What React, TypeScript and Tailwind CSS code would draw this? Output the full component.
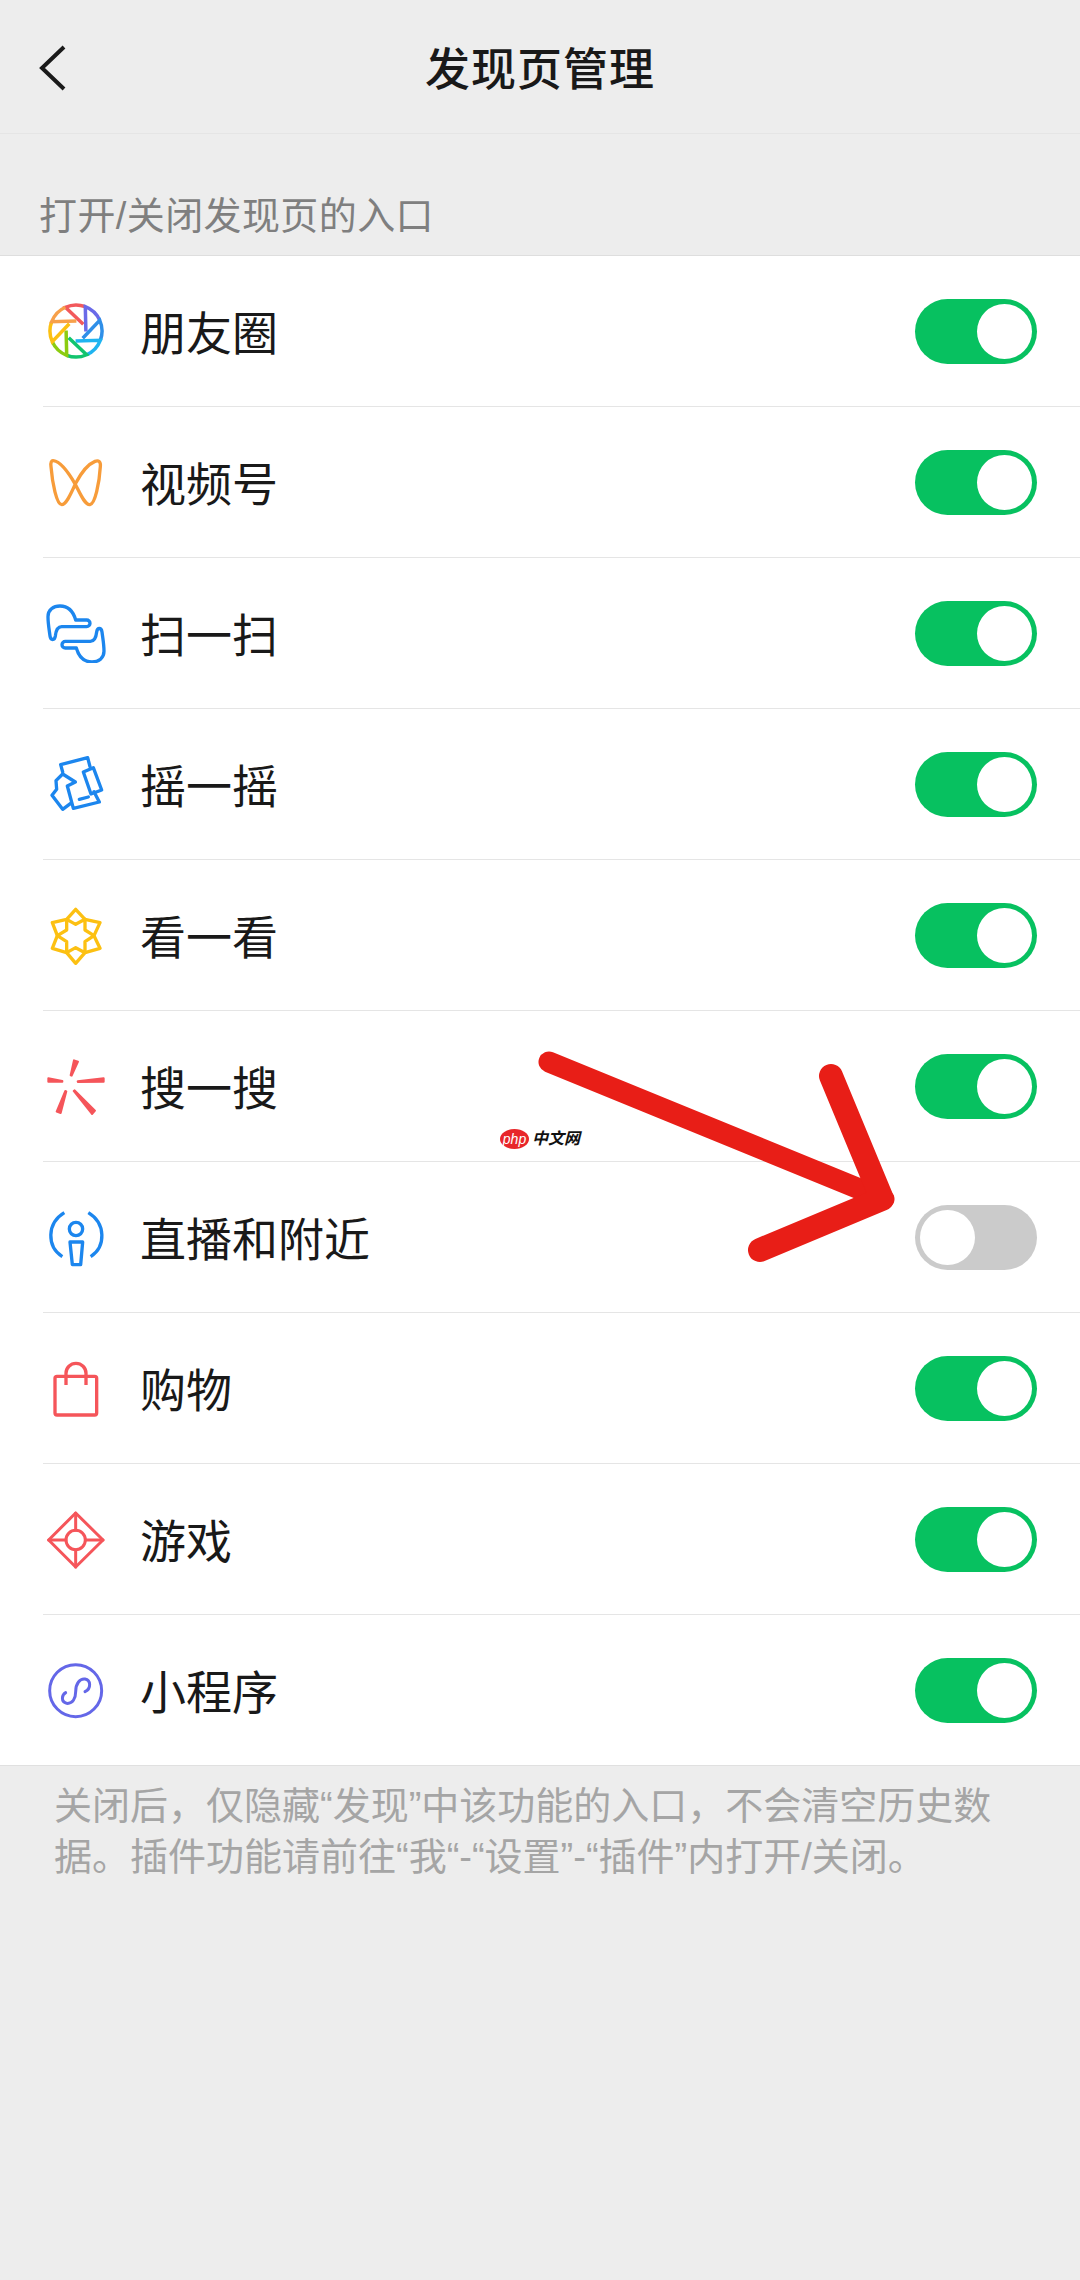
import type { ReactNode } from "react"

const ringColors = ["#f2595c", "#6a6ae8", "#2f8fe8", "#1fb4f0", "#12c46e", "#8ccc10", "#fcc012", "#f7a04a"]

function MomentsIcon() {
  return (
    <svg viewBox="0 0 60 60" className="w-[60px] h-[60px]" fill="none" strokeWidth="3.5">
      {ringColors.map((color, i) => (
        <path
          key={color}
          d="M37.3 23.3 L19.4 6.25 A26 26 0 0 1 39.3 5.7"
          stroke={color}
          transform={`rotate(${45 * i} 30 30)`}
        />
      ))}
    </svg>
  )
}

// the rest are traced at 3x, so viewBox is a 180 square round the icon
function Traced({ y, children, stroke = "none" }: { y: number; children: ReactNode; stroke?: string }) {
  return (
    <svg
      viewBox={`78 ${y} 180 180`}
      className="w-[60px] h-[60px]"
      fill="none"
      stroke={stroke}
      strokeWidth="10"
      strokeLinecap="round"
      strokeLinejoin="round"
    >
      {children}
    </svg>
  )
}

const icons: ReactNode[] = [
  <MomentsIcon key="moments" />,
  <Traced key="channels" y={96} stroke="#f79c3a">
    <path d="M100 122 C125 125 150 165 167 195 C180 220 195 256 210 254 C225 252 238 190 241 140 C243 124 235 120 225 124 C200 134 180 165 167 190 C155 215 140 254 125 254 C110 254 97 190 93 140 C91 127 95 121 100 122 Z" />
  </Traced>,
  <Traced key="scan" y={549} stroke="#1c86ee">
    <path d="M120 558 C145 558 160 575 167 600 L200 600 A10 10 0 0 1 200 620 L125 620 C112 620 108 630 106 648 C104 662 92 662 90 648 C87 625 84 610 84 590 C84 570 100 558 120 558 Z" />
    <path
      transform="rotate(180 168 642)"
      d="M120 558 C145 558 160 575 167 600 L200 600 A10 10 0 0 1 200 620 L125 620 C112 620 108 630 106 648 C104 662 92 662 90 648 C87 625 84 610 84 590 C84 570 100 558 120 558 Z"
    />
  </Traced>,
  <Traced key="shake" y={1002} stroke="#1c86ee">
    <path d="M210 1040 L203 1013 L122 1034 L128 1056 M222 1115 L238 1146 L160 1165 L142 1098 L166 1086 L128 1062 L108 1082 L110 1108 L96 1126 L128 1168 L152 1150" />
    <path d="M190 1056 L220 1043 L245 1110 L213 1122 Z" />
    <path d="M178 1138 L205 1131" />
  </Traced>,
  <Traced key="look" y={75} stroke="#fcc012">
    <path d="M167 88 L195 118 L240 128 L222 167 L240 205 L195 218 L167 250 L140 218 L97 205 L112 167 L97 128 L140 118 Z" />
    <path d="M140 118 L167 133 L195 118 L195 150 L222 167 L195 185 L195 218 L167 203 L140 218 L140 185 L112 167 L140 150 Z" />
  </Traced>,
  <Traced key="search" y={528}>
    <g fill="#f5555a" stroke="#f5555a" strokeWidth="6">
      <path d="M162 541 L174 545 L155 587 L152 586 Z" />
      <path d="M85 595 L127 603 L127 605 L85 605 Z" />
      <path d="M173 604 L251 595 L251 605 L174 606 Z" />
      <path d="M136 633 L139 634 L122 699 L110 695 Z" />
      <path d="M164 631 L225 692 L216 702 L161 633 Z" />
    </g>
  </Traced>,
  <Traced key="live" y={981} stroke="#1c86ee">
    <path d="M133 998 C80 1030 80 1100 127 1130" strokeLinecap="butt" />
    <path d="M205 998 C258 1030 258 1100 212 1130" strokeLinecap="butt" />
    <circle cx="168" cy="1047" r="20" />
    <path d="M150 1086 L188 1086 L182 1154 L157 1154 Z" />
  </Traced>,
  <Traced key="shop" y={84} stroke="#f5555a">
    <rect x="105" y="139" width="125" height="116" rx="6" />
    <path d="M138 165 L138 130 A30 30 0 0 1 198 130 L198 165" strokeLinecap="butt" />
  </Traced>,
  <Traced key="game" y={537} stroke="#f5555a">
    <path d="M167 549 L249 630 L167 711 L86 630 Z" strokeWidth="9" />
    <circle cx="167" cy="630" r="29" strokeWidth="9" />
    <path d="M167 549 L167 601 M167 659 L167 711 M86 630 L138 630 M196 630 L249 630" strokeWidth="9" />
  </Traced>,
  <Traced key="mini" y={990} stroke="#6467e8">
    <circle cx="167" cy="1082" r="78" strokeWidth="9" />
    <path d="M137 1088 C125 1095 122 1115 140 1120 C158 1122 167 1105 167 1085 C167 1060 180 1045 195 1047 C212 1050 215 1075 195 1085" strokeWidth="9" />
  </Traced>,
]

const rows = [
  { label: "朋友圈", on: true },
  { label: "视频号", on: true },
  { label: "扫一扫", on: true },
  { label: "摇一摇", on: true },
  { label: "看一看", on: true },
  { label: "搜一搜", on: true },
  { label: "直播和附近", on: false },
  { label: "购物", on: true },
  { label: "游戏", on: true },
  { label: "小程序", on: true },
]

function Toggle({ on }: { on: boolean }) {
  return (
    <div
      className={
        on
          ? "flex h-[65px] w-[122px] items-center justify-end rounded-full bg-[#07c160] px-[5px]"
          : "flex h-[65px] w-[122px] items-center justify-start rounded-full bg-[#cbcbcb] px-[5px]"
      }
    >
      <div className="h-[55px] w-[55px] rounded-full bg-white" />
    </div>
  )
}

export default function App() {
  return (
    <div className="relative min-h-[2280px] w-[1080px] overflow-hidden bg-[#ededed] font-['Liberation_Sans','Noto_Sans_CJK_SC',sans-serif]">
      {/* Header */}
      <header className="relative flex h-[134px] items-center justify-center border-b border-[#e5e5e5]">
        <svg viewBox="0 0 30 50" className="absolute left-[38px] top-[43px] h-[50px] w-[30px]" fill="none" stroke="#1a1a1a" strokeWidth="4">
          <path d="M26 4 L4 25 L26 46" />
        </svg>
        <h1 className="pt-[8px] text-[45px] font-medium tracking-[1px] text-[#191919]">发现页管理</h1>
      </header>

      <div className="flex h-[122px] items-end border-b border-[#dedede] pb-[11px] pl-[39px] text-[38px] leading-[56px] tracking-[0.4px] text-[#7f7f7f]">
        打开/关闭发现页的入口
      </div>

      {/* Rows */}
      <div className="border-b border-[#e0e0e0] bg-white">
        {rows.map((row, i) => (
          <div key={row.label} className="ml-[43px]">
            <div
              className={
                i === rows.length - 1
                  ? "flex h-[150px] items-center pl-[3px] pr-[43px]"
                  : "box-content flex h-[150px] items-center border-b border-[#e5e5e5] pl-[3px] pr-[43px]"
              }
            >
              {icons[i]}
              <span className="ml-[34px] flex-1 pt-[6px] text-[46px] leading-[60px] text-[#191919]">{row.label}</span>
              <Toggle on={row.on} />
            </div>
          </div>
        ))}
      </div>

      {/* Footer note */}
      <p className="pl-[54px] pr-[80px] pt-[15px] text-[38px] leading-[51px] text-[#a5a5a5]">
        关闭后，仅隐藏“发现”中该功能的入口，不会清空历史数据。插件功能请前往“我“-“设置”-“插件”内打开/关闭。
      </p>

      {/* Annotation pasted over the screenshot */}
      <svg viewBox="0 0 1080 2280" className="absolute left-0 top-0 h-[2280px] w-[1080px]" fill="none" stroke="#e81e17" strokeLinecap="round" strokeLinejoin="round">
        <path d="M549 1062 L884 1199" strokeWidth="21" />
        <path d="M831 1076 L882 1199 L760 1250" strokeWidth="24" />
      </svg>
      <div className="absolute left-[500px] top-[1129px] flex items-center">
        <span className="flex h-[20px] w-[29px] items-center justify-center rounded-[50%] bg-[#e8262a] text-[14px] italic leading-none text-white">php</span>
        <span className="ml-[3px] text-[16px] font-bold italic leading-[20px] text-[#111111]">中文网</span>
      </div>
    </div>
  )
}
